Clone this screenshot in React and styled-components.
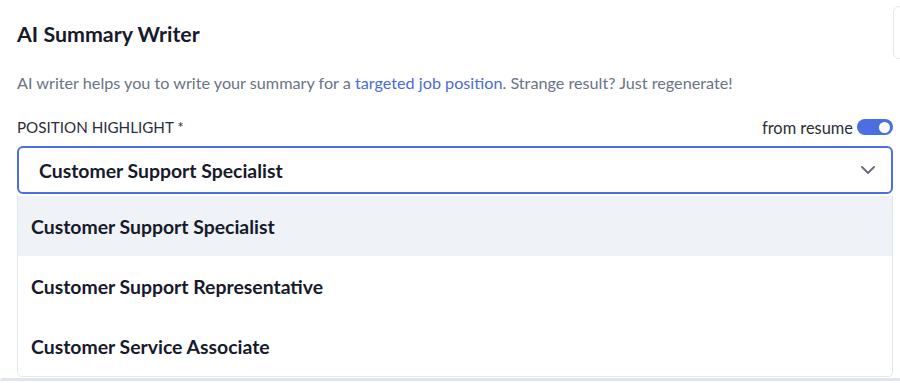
import React from 'react';
import styled, { createGlobalStyle } from 'styled-components';

const Styles = createGlobalStyle`
	html,
	body {
		margin: 0;
		background: #fff;
		overflow: hidden;
		font-family: Lato, 'Noto Sans', sans-serif;
		color: #1c1f2e;
	}
`;

const Page = styled.div`
	height: 383px;
	display: flex;
	flex-direction: column;
	box-sizing: border-box;
	padding: 6px 7px 0 17px;
`;

const Header = styled.div`
	display: flex;
	justify-content: space-between;
	align-items: flex-start;
	height: 56px;
`;

const Title = styled.h2`
	margin: 15px 0 0;
	font-size: 21.4px;
	font-weight: 700;
	line-height: 26px;
	color: #161a2b;
`;

const SideCard = styled.div`
	width: 40px;
	height: 53px;
	margin-right: -40px;
	border: 1px solid #e3e8f0;
	border-radius: 6px;
	box-sizing: border-box;
`;

const Hint = styled.p`
	margin: 10px 0 0;
	font-size: 16.2px;
	line-height: 22px;
	color: #6b7385;
	& a {
		color: #4a6bd8;
		text-decoration: none;
	}
`;

const LabelRow = styled.div`
	display: flex;
	justify-content: space-between;
	align-items: center;
	margin-top: 22px;
	height: 22px;
`;

const Label = styled.span`
	font-size: 15.2px;
	color: #2a2d3a;
`;

const ToggleWrap = styled.label`
	display: flex;
	align-items: center;
	gap: 4px;
	font-size: 16.4px;
	color: #2a2d3a;
`;

const Toggle = styled.span`
	width: 36px;
	height: 16px;
	border-radius: 8px;
	background: ${(p) => (p.$on ? '#4b6ee3' : '#cfd5e0')};
	display: flex;
	align-items: center;
	justify-content: ${(p) => (p.$on ? 'flex-end' : 'flex-start')};
	padding: 0 3px;
	box-sizing: border-box;
	&::after {
		content: '';
		width: 11px;
		height: 11px;
		border-radius: 50%;
		background: #fff;
	}
`;

const Select = styled.div`
	margin-top: 8px;
	height: 48px;
	flex-shrink: 0;
	box-sizing: border-box;
	border: 2px solid #4b6ee3;
	border-radius: 6px;
	display: flex;
	align-items: center;
	justify-content: space-between;
	padding: 0 15px 0 20px;
	font-size: 19.4px;
	font-weight: 700;
	color: #161a2b;
`;

const Menu = styled.ul`
	list-style: none;
	margin: 2px 0 0;
	padding: 0;
	border: 1px solid #e2e6ee;
	border-top: none;
	border-radius: 0 0 5px 5px;
	overflow: hidden;
	flex-shrink: 0;
`;

const Option = styled.li`
	height: 60px;
	display: flex;
	align-items: center;
	padding-left: 13px;
	font-size: 19.4px;
	font-weight: 700;
	color: #161a2b;
	background: ${(p) => (p.$active ? '#eff2f7' : '#fff')};
`;

const Bottom = styled.div`
	height: 3px;
	flex-shrink: 0;
	margin: 1px -7px 0 -17px;
	background: #dfe4ed;
	border-top-left-radius: 3px;
`;

const Chevron = () => (
	<svg width="16" height="10" viewBox="0 0 16 10" fill="none">
		<path d="M2 2l6 6 6-6" stroke="#6b7080" strokeWidth="2" strokeLinecap="round" strokeLinejoin="round" />
	</svg>
);

const options = ['Customer Support Specialist', 'Customer Support Representative', 'Customer Service Associate'];

const App = () => (
	<Page>
		<Styles />
		<Header>
			<Title>AI Summary Writer</Title>
			<SideCard />
		</Header>
		<Hint>
			AI writer helps you to write your summary for a <a href="#">targeted job position</a>. Strange result? Just regenerate!
		</Hint>
		<LabelRow>
			<Label>POSITION HIGHLIGHT *</Label>
			<ToggleWrap>
				from resume
				<Toggle $on />
			</ToggleWrap>
		</LabelRow>
		<Select>
			<span>Customer Support Specialist</span>
			<Chevron />
		</Select>
		<Menu>
			{options.map((o, i) => (
				<Option key={o} $active={i === 0}>
					{o}
				</Option>
			))}
		</Menu>
		<Bottom />
	</Page>
);

export default App;
